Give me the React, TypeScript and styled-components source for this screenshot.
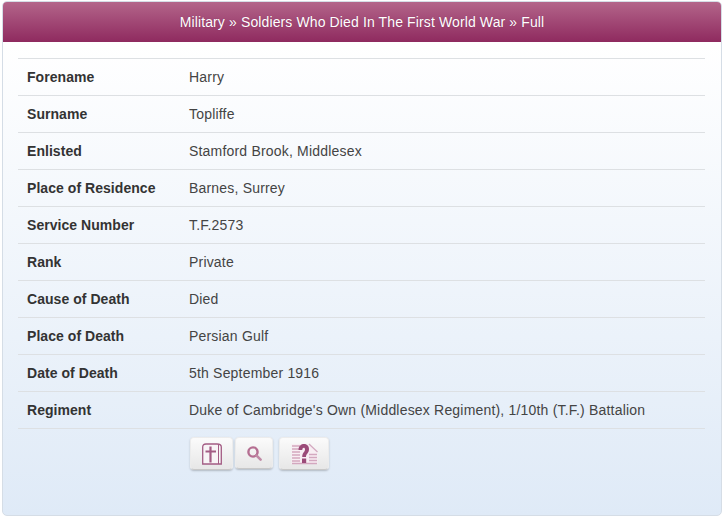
import React from "react";
import styled, { createGlobalStyle } from "styled-components";

const Global = createGlobalStyle`
  html, body { margin: 0; padding: 0; background: #fff; }
  body { font-family: "Liberation Sans", Arial, sans-serif; }
`;
const Page = styled.div`
  width: 725px; height: 518px; padding: 1px 3px 2px 2px; box-sizing: border-box;
`;
const Panel = styled.section`
  width: 720px; height: 515px; box-sizing: border-box;
  border: 1px solid #d5dde6; border-radius: 5px; overflow: hidden;
  background: linear-gradient(#ffffff 8%, #dfeaf7 100%);
`;
const Header = styled.h1`
  margin: 0; height: 40px; line-height: 40px; text-align: center;
  font-size: 14px; font-weight: 400; color: #fff; letter-spacing: .12px;
  background: linear-gradient(#b3658a, #8f2a5f);
  text-shadow: 0 0 1px rgba(80,0,40,.4);
`;
const Body = styled.div`
  padding: 16px 16px 0 15px;
`;
const Table = styled.dl`
  margin: 0; border-top: 1px solid #dde0e3;
`;
const Row = styled.div`
  display: grid; grid-template-columns: 171px 1fr; height: 37px; box-sizing: border-box;
  align-items: center; border-bottom: 1px solid #dde0e3;
  font-size: 14px; line-height: 20px;
`;
const Label = styled.dt`
  padding-left: 9px; font-weight: 700; color: #333; letter-spacing: .05px;
`;
const Value = styled.dd`
  margin: 0; color: #444; letter-spacing: .19px;
`;
const Actions = styled.div`
  display: flex; align-items: flex-start; gap: 2px; padding: 8px 0 0 172px;
`;
const IconButton = styled.button<{ $w: number; $h: number; $ml?: number }>`
  width: ${p => p.$w}px; height: ${p => p.$h}px; margin-left: ${p => p.$ml ?? 0}px;
  padding: 0; display: flex; align-items: center; justify-content: center;
  border: 1px solid #ececec; border-bottom-color: #c8c8c8; border-radius: 4px;
  background: linear-gradient(#fbfbfb, #e7e7e7);
  box-shadow: 0 1px 2px rgba(0,0,0,.22);
`;

const rows: [string, string][] = [
  ["Forename", "Harry"],
  ["Surname", "Topliffe"],
  ["Enlisted", "Stamford Brook, Middlesex"],
  ["Place of Residence", "Barnes, Surrey"],
  ["Service Number", "T.F.2573"],
  ["Rank", "Private"],
  ["Cause of Death", "Died"],
  ["Place of Death", "Persian Gulf"],
  ["Date of Death", "5th September 1916"],
  ["Regiment", "Duke of Cambridge's Own (Middlesex Regiment), 1/10th (T.F.) Battalion"],
];

const BibleIcon = () => (
  <svg width="20" height="22" viewBox="0 0 20 22" fill="none">
    <path d="M0.7 21V4Q0.7 1 4 1H15Q19.3 1 19.3 4V21Z" fill="#f8f4f6" stroke="#a35c84" strokeWidth="1.3" />
    <path d="M16.5 1.5V21" stroke="#a35c84" strokeWidth="1" />
    <path d="M8.5 3.5V19.5M3.5 8.5H14" stroke="#a35c84" strokeWidth="2.2" />
  </svg>
);
const SearchIcon = () => (
  <svg width="15" height="15" viewBox="0 0 15 15" fill="none">
    <circle cx="6" cy="6" r="4.6" stroke="#b56f92" strokeWidth="2.4" />
    <path d="M9.6 9.6L13.6 13.6" stroke="#c08aa6" strokeWidth="2.6" strokeLinecap="round" />
  </svg>
);
const HelpDocIcon = () => (
  <svg width="27" height="22" viewBox="0 0 27 22" fill="none">
    <path d="M0.5 1H18L26.5 9V21H0.5Z" fill="#f8eef3" />
    <path d="M1 3H9M1 6H9M1 9H9M1 12H9M1 15H9M1 18H9M1 20.5H26M18 11.5H26M18 14.5H26M18 17.5H26" stroke="#d3a8bf" strokeWidth="1.3" />
    <path d="M18 1L26.5 9" stroke="#d3a8bf" strokeWidth="1.2" />
    <path d="M7.5 7C7.5 -0.8 18 -0.8 18 6C18 10.5 15 10.5 15 14H11.2C11.2 9 14 9.5 14 6.2C14 4 11.3 4 11.3 7Z" fill="#9b4a78" />
    <rect x="11" y="15.5" width="4.2" height="4.5" fill="#9b4a78" />
  </svg>
);

export default function App() {
  return (
    <Page>
      <Global />
      <Panel>
        <Header>Military » Soldiers Who Died In The First World War » Full</Header>
        <Body>
          <Table>
            {rows.map(([k, v]) => (
              <Row key={k}>
                <Label>{k}</Label>
                <Value>{v}</Value>
              </Row>
            ))}
          </Table>
          <Actions>
            <IconButton $w={43} $h={33} aria-label="Burial"><BibleIcon /></IconButton>
            <IconButton $w={38} $h={32} aria-label="Search"><SearchIcon /></IconButton>
            <IconButton $w={50} $h={33} $ml={4} aria-label="Help"><HelpDocIcon /></IconButton>
          </Actions>
        </Body>
      </Panel>
    </Page>
  );
}
